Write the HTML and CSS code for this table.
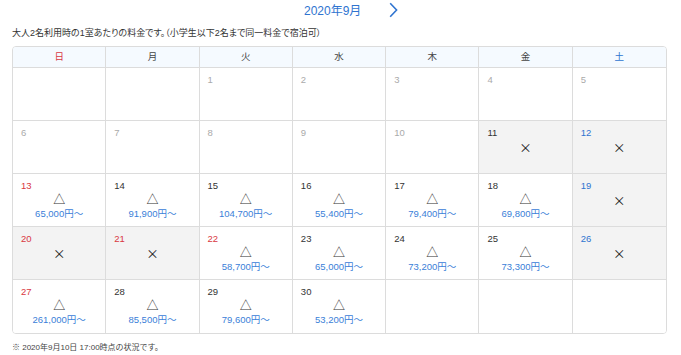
FILE: index.html
```html
<!DOCTYPE html>
<html lang="ja">
<head>
<meta charset="utf-8">
<link rel="stylesheet" href="styles.css">
</head>
<body>
<div class="page">
  <div class="month-nav">
    <span class="month-title">2020年9月</span>
    <svg class="next" width="9" height="16" viewBox="0 0 9 16"><path d="M1.2 1.2 L7.6 8 L1.2 14.8" fill="none" stroke="#2f74d0" stroke-width="1.6"/></svg>
  </div>
  <p class="lead">大人2名利用時の1室あたりの料金です。（小学生以下2名まで同一料金で宿泊可）</p>
  <div class="cal">
    <div class="hd sun">日</div><div class="hd">月</div><div class="hd">火</div><div class="hd">水</div><div class="hd">木</div><div class="hd">金</div><div class="hd sat last">土</div>

    <div class="cell"></div>
    <div class="cell"></div>
    <div class="cell past"><span class="d">1</span></div>
    <div class="cell past"><span class="d">2</span></div>
    <div class="cell past"><span class="d">3</span></div>
    <div class="cell past"><span class="d">4</span></div>
    <div class="cell past last"><span class="d">5</span></div>

    <div class="cell past"><span class="d">6</span></div>
    <div class="cell past"><span class="d">7</span></div>
    <div class="cell past"><span class="d">8</span></div>
    <div class="cell past"><span class="d">9</span></div>
    <div class="cell past"><span class="d">10</span></div>
    <div class="cell full"><span class="d">11</span><span class="s x">×</span></div>
    <div class="cell full sat last"><span class="d">12</span><span class="s x">×</span></div>

    <div class="cell sun"><span class="d">13</span><span class="s">△</span><span class="p">65,000円〜</span></div>
    <div class="cell"><span class="d">14</span><span class="s">△</span><span class="p">91,900円〜</span></div>
    <div class="cell"><span class="d">15</span><span class="s">△</span><span class="p">104,700円〜</span></div>
    <div class="cell"><span class="d">16</span><span class="s">△</span><span class="p">55,400円〜</span></div>
    <div class="cell"><span class="d">17</span><span class="s">△</span><span class="p">79,400円〜</span></div>
    <div class="cell"><span class="d">18</span><span class="s">△</span><span class="p">69,800円〜</span></div>
    <div class="cell full sat last"><span class="d">19</span><span class="s x">×</span></div>

    <div class="cell full sun"><span class="d">20</span><span class="s x">×</span></div>
    <div class="cell full sun"><span class="d">21</span><span class="s x">×</span></div>
    <div class="cell sun"><span class="d">22</span><span class="s">△</span><span class="p">58,700円〜</span></div>
    <div class="cell"><span class="d">23</span><span class="s">△</span><span class="p">65,000円〜</span></div>
    <div class="cell"><span class="d">24</span><span class="s">△</span><span class="p">73,200円〜</span></div>
    <div class="cell"><span class="d">25</span><span class="s">△</span><span class="p">73,300円〜</span></div>
    <div class="cell full sat last"><span class="d">26</span><span class="s x">×</span></div>

    <div class="cell sun bottom"><span class="d">27</span><span class="s">△</span><span class="p">261,000円〜</span></div>
    <div class="cell bottom"><span class="d">28</span><span class="s">△</span><span class="p">85,500円〜</span></div>
    <div class="cell bottom"><span class="d">29</span><span class="s">△</span><span class="p">79,600円〜</span></div>
    <div class="cell bottom"><span class="d">30</span><span class="s">△</span><span class="p">53,200円〜</span></div>
    <div class="cell bottom"></div>
    <div class="cell bottom"></div>
    <div class="cell bottom last"></div>
  </div>
  <p class="note">※ 2020年9月10日 17:00時点の状況です。</p>
</div>
</body>
</html>
```

FILE: styles.css
```css
* { box-sizing: border-box; }
html, body { margin: 0; padding: 0; background: #fff; }
body {
  font-family: "Liberation Sans", "Noto Sans CJK JP", sans-serif;
  color: #333;
}
.page {
  width: 681px;
  padding: 0 14px 0 12px;
}
.month-nav {
  display: flex;
  align-items: center;
  height: 22px;
  padding-left: 292px;
}
.month-title {
  color: #2f74d0;
  font-size: 12px;
  line-height: 20px;
  width: 85px;
}
.next { display: block; margin-top: -2px; }
.lead {
  margin: 4px 0 0;
  font-size: 9px;
  line-height: 14px;
  color: #333;
  font-feature-settings: "palt";
}
.cal {
  margin-top: 6px;
  display: grid;
  grid-template-columns: repeat(7, 1fr);
  grid-template-rows: 21px repeat(5, 53px);
  border: 1px solid #dcdcdc;
  border-radius: 4px;
  overflow: hidden;
}
.hd {
  background: #f5faff;
  border-right: 1px solid #dcdcdc;
  border-bottom: 1px solid #dcdcdc;
  font-size: 9.5px;
  color: #444;
  text-align: center;
  line-height: 20px;
}
.hd.sun { color: #d9383f; }
.hd.sat { color: #2f74d0; }
.cell {
  border-right: 1px solid #dcdcdc;
  border-bottom: 1px solid #dcdcdc;
  display: flex;
  flex-direction: column;
  padding-top: 6px;
  background: #fff;
}
.last { border-right: none; }
.bottom { border-bottom: none; }
.cell.full { background: #f3f3f3; }
.d {
  font-size: 9.5px;
  line-height: 12px;
  padding-left: 8px;
  color: #333;
}
.cell.past .d { color: #aaa; }
.cell.sun .d { color: #d9383f; }
.cell.sat .d { color: #2f74d0; }
.s {
  text-align: center;
  font-size: 12px;
  line-height: 16px;
  color: #333;
}
.s.x {
  font-family: "Noto Sans CJK JP", sans-serif;
  font-size: 12.5px;
  margin-top: 1px;
  color: #222;
}
.p {
  text-align: center;
  font-size: 9.5px;
  line-height: 12px;
  color: #3a80d8;
}
.note {
  margin: 8px 0 0;
  font-size: 8px;
  line-height: 11px;
  color: #444;
}
```
